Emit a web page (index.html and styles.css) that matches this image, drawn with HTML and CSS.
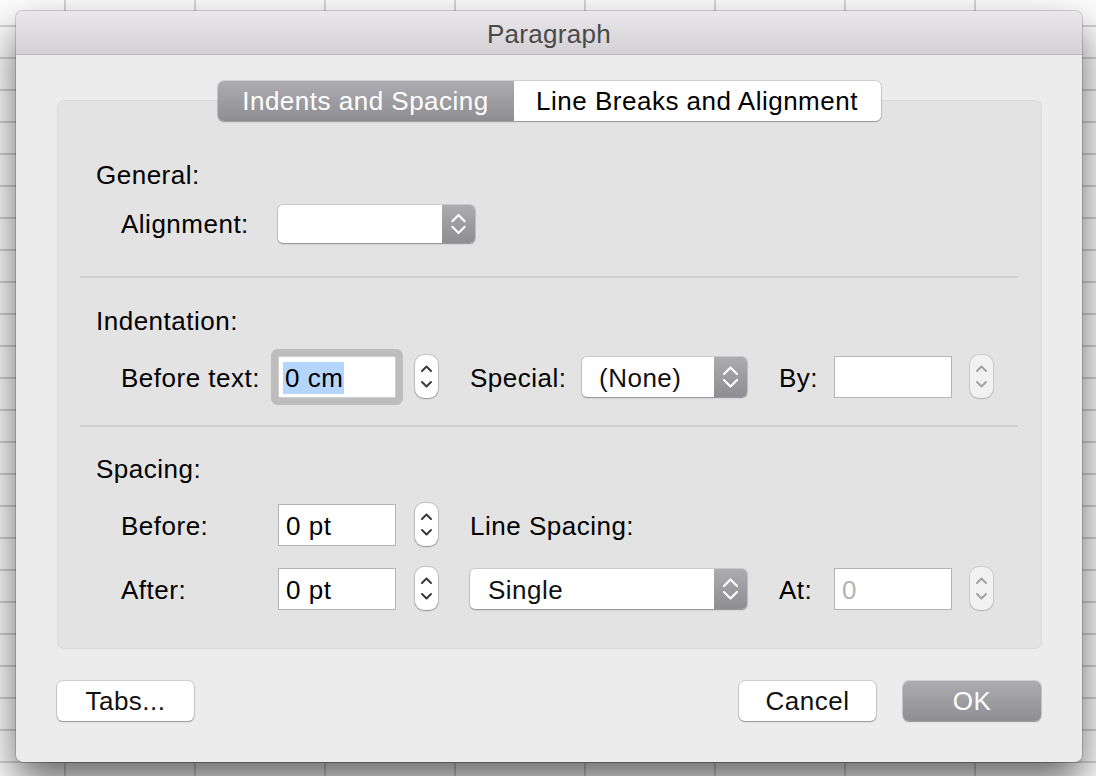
FILE: index.html
```html
<!DOCTYPE html>
<html>
<head>
<meta charset="utf-8">
<title>Paragraph</title>
<link rel="stylesheet" href="styles.css">
</head>
<body>
<div class="desk">
  <div class="dialog">
    <div class="titlebar">Paragraph</div>
    <div class="tabs">
      <div class="tab tab-sel">Indents and Spacing</div>
      <div class="tab tab-other">Line Breaks and Alignment</div>
    </div>
    <div class="box">
      <div class="heading h-general">General:</div>
      <div class="row row-align">
        <span class="label label-center">Alignment:</span>
        <div class="popup popup-align">
          <span class="val"></span>
          <span class="arrows"><svg viewBox="0 0 33 40" width="33" height="38"><path d="M10 17 L16.5 10.5 L23 17 M10 23 L16.5 29.5 L23 23" fill="none" stroke="#fff" stroke-width="2.2" stroke-linecap="round" stroke-linejoin="round"/></svg></span>
        </div>
      </div>
      <div class="sep sep1"></div>

      <div class="heading h-indent">Indentation:</div>
      <div class="row row-indent">
        <span class="label">Before text:</span>
        <div class="field focused"><span class="selected">0 cm</span></div>
        <div class="stepper c4"><svg viewBox="0 0 23 43" width="23" height="43"><path d="M7 16 L11.5 11.5 L16 16 M7 27 L11.5 31.5 L16 27" fill="none" stroke="#3a3a3a" stroke-width="2" stroke-linecap="round" stroke-linejoin="round"/></svg></div>
        <span class="label c6">Special:</span>
        <div class="popup c7">
          <span class="val">(None)</span>
          <span class="arrows"><svg viewBox="0 0 33 40" width="33" height="40"><path d="M10 17 L16.5 10.5 L23 17 M10 23 L16.5 29.5 L23 23" fill="none" stroke="#fff" stroke-width="2.2" stroke-linecap="round" stroke-linejoin="round"/></svg></span>
        </div>
        <span class="label c9">By:</span>
        <div class="field c10"></div>
        <div class="stepper disabled c12"><svg viewBox="0 0 23 43" width="23" height="43"><path d="M7 16 L11.5 11.5 L16 16 M7 27 L11.5 31.5 L16 27" fill="none" stroke="#a2a2a2" stroke-width="2" stroke-linecap="round" stroke-linejoin="round"/></svg></div>
      </div>
      <div class="sep sep2"></div>

      <div class="heading h-spacing">Spacing:</div>
      <div class="row row-before">
        <span class="label">Before:</span>
        <div class="field">0 pt</div>
        <div class="stepper c4"><svg viewBox="0 0 23 43" width="23" height="43"><path d="M7 16 L11.5 11.5 L16 16 M7 27 L11.5 31.5 L16 27" fill="none" stroke="#3a3a3a" stroke-width="2" stroke-linecap="round" stroke-linejoin="round"/></svg></div>
        <span class="label c6-wide">Line Spacing:</span>
      </div>
      <div class="row row-after">
        <span class="label">After:</span>
        <div class="field">0 pt</div>
        <div class="stepper c4"><svg viewBox="0 0 23 43" width="23" height="43"><path d="M7 16 L11.5 11.5 L16 16 M7 27 L11.5 31.5 L16 27" fill="none" stroke="#3a3a3a" stroke-width="2" stroke-linecap="round" stroke-linejoin="round"/></svg></div>
        <div class="popup c6-wide">
          <span class="val val-single">Single</span>
          <span class="arrows"><svg viewBox="0 0 33 40" width="33" height="40"><path d="M10 17 L16.5 10.5 L23 17 M10 23 L16.5 29.5 L23 23" fill="none" stroke="#fff" stroke-width="2.2" stroke-linecap="round" stroke-linejoin="round"/></svg></span>
        </div>
        <span class="label c9">At:</span>
        <div class="field c10 placeholder">0</div>
        <div class="stepper disabled c12"><svg viewBox="0 0 23 43" width="23" height="43"><path d="M7 16 L11.5 11.5 L16 16 M7 27 L11.5 31.5 L16 27" fill="none" stroke="#a2a2a2" stroke-width="2" stroke-linecap="round" stroke-linejoin="round"/></svg></div>
      </div>
    </div>
    <div class="footer">
      <div class="btn">Tabs...</div>
      <div class="spacer"></div>
      <div class="btn">Cancel</div>
      <div class="btn btn-default">OK</div>
    </div>
  </div>
</div>
</body>
</html>
```

FILE: styles.css
```css
html, body {
  margin: 0;
  padding: 0;
}

body {
  font-family: "Liberation Sans", Arial, sans-serif;
  font-size: 26px;
  letter-spacing: 0.5px;
  color: #111;
}

.desk {
  width: 1096px;
  height: 776px;
  box-sizing: border-box;
  padding: 11px 0 0 16px;
  overflow: hidden;
  background-color: #fdfdfd;
  background-image:
    linear-gradient(to right, #d4d4d4 0, #d4d4d4 2px, transparent 2px),
    linear-gradient(to bottom, #d4d4d4 0, #d4d4d4 2px, transparent 2px);
  background-size: 130px 32px;
  background-position: 64px 25px;
}

.dialog {
  width: 1066px;
  height: 751px;
  background: #ececec;
  border-radius: 7px;
  box-shadow: 0 0 0 1px rgba(0, 0, 0, 0.16), 0 20px 42px rgba(0, 0, 0, 0.6);
  overflow: hidden;
  display: flex;
  flex-direction: column;
}

.titlebar {
  height: 40px;
  padding-top: 3px;
  line-height: 40px;
  text-align: center;
  color: #4a4a4a;
  background: linear-gradient(#e9e7e9, #d3d1d3);
  border-bottom: 1px solid #b9b9b9;
  flex: none;
  letter-spacing: 0.3px;
}

.tabs {
  position: relative;
  z-index: 1;
  display: flex;
  align-self: center;
  margin-top: 26px;
  height: 40px;
  border-radius: 6px;
  box-shadow: 0 0 0 1px rgba(0, 0, 0, 0.12), 0 1px 1.5px rgba(0, 0, 0, 0.25);
  overflow: hidden;
  flex: none;
}

.tab {
  height: 40px;
  line-height: 40px;
  text-align: center;
}

.tab-sel {
  width: 296px;
  color: #fff;
  background: linear-gradient(#adacb1, #8e8d92);
}

.tab-other {
  width: 367px;
  background: #fff;
  color: #000;
}

.box {
  margin: -21px 40px 0 41px;
  padding: 59px 24px 40px 23px;
  background: #e3e3e3;
  border-radius: 7px;
  box-shadow: inset 0 0 0 1px rgba(0, 0, 0, 0.035);
  flex: none;
}

.heading {
  padding-left: 16px;
  line-height: 32px;
  height: 32px;
  color: #000;
}

.h-indent {
  margin-top: 27px;
}

.h-spacing {
  margin-top: 26px;
}

.row {
  display: grid;
  grid-template-columns: 157px 118px 19px 23px 32px 112px 165px 32px 55px 118px 18px 23px;
  height: 42px;
  align-items: center;
  margin-left: 41px;
}

.row-align {
  margin-top: 14px;
  height: 38px;
}

.row-indent,
.row-before {
  margin-top: 18px;
}

.row-after {
  margin-top: 22px;
}

.label {
  grid-column: 1;
  line-height: 39px;
  padding-top: 3px;
  color: #000;
  white-space: nowrap;
}

.label-center {
  line-height: 38px;
  padding-top: 0;
}

.c4 { grid-column: 4; }
.c6 { grid-column: 6; }
.c6-wide { grid-column: 6 / span 2; }
.c7 { grid-column: 7; }
.c9 { grid-column: 9; }
.c10 { grid-column: 10; }
.c12 { grid-column: 12; }

.sep {
  height: 2px;
  background: #d1d1d1;
}

.sep1 {
  margin-top: 33px;
}

.sep2 {
  margin-top: 28px;
}

.popup {
  display: flex;
  height: 40px;
  border-radius: 5px;
  background: #fff;
  box-shadow: 0 0 0 1px rgba(0, 0, 0, 0.1), 0 1px 1.5px rgba(0, 0, 0, 0.3);
  overflow: hidden;
}

.popup-align {
  grid-column: 2 / span 4;
  width: 197px;
  height: 38px;
}

.popup .val {
  flex: 1;
  padding-left: 17px;
  padding-top: 3px;
  line-height: 37px;
  color: #111;
  white-space: nowrap;
}

.popup .val-single {
  padding-left: 18px;
}

.popup .arrows {
  width: 33px;
  flex: none;
  display: flex;
  align-items: center;
  justify-content: center;
  background: linear-gradient(#acabb0, #8e8d92);
}

.popup .arrows svg {
  display: block;
}

.field {
  grid-column: 2;
  height: 42px;
  box-sizing: border-box;
  border: 1px solid #b4b4b4;
  background: #fff;
  padding: 3px 0 0 7px;
  line-height: 37px;
  color: #000;
  white-space: nowrap;
}

.field.c10 {
  grid-column: 10;
}

.field.focused {
  border-color: #cfcfcf;
  padding-left: 4px;
  border-radius: 2px;
  box-shadow: 0 0 0 7px #bdbdbd;
}

.selected {
  display: inline-block;
  background: #b4d6fe;
  line-height: 32px;
  padding: 0 1px 0 2px;
}

.placeholder {
  color: #b3b3b3;
}

.stepper {
  width: 23px;
  height: 43px;
  border-radius: 9px;
  background: #fff;
  box-shadow: 0 0 0 1px rgba(0, 0, 0, 0.13), 0 1px 1.5px rgba(0, 0, 0, 0.25);
}

.stepper svg {
  display: block;
}

.stepper.disabled {
  background: #f1f1f1;
  box-shadow: 0 0 0 1px rgba(0, 0, 0, 0.09), 0 1px 1.5px rgba(0, 0, 0, 0.14);
}

.footer {
  display: flex;
  gap: 27px;
  margin: 32px 41px 0 41px;
  flex: none;
}

.spacer {
  flex: 1;
}

.btn {
  width: 137px;
  height: 40px;
  line-height: 40px;
  text-align: center;
  border-radius: 6px;
  background: #fff;
  color: #111;
  box-shadow: 0 0 0 1px rgba(0, 0, 0, 0.12), 0 1px 1.5px rgba(0, 0, 0, 0.28);
}

.btn-default {
  width: 138px;
  color: #fff;
  background: linear-gradient(#adacb1, #8e8d92);
}
```
